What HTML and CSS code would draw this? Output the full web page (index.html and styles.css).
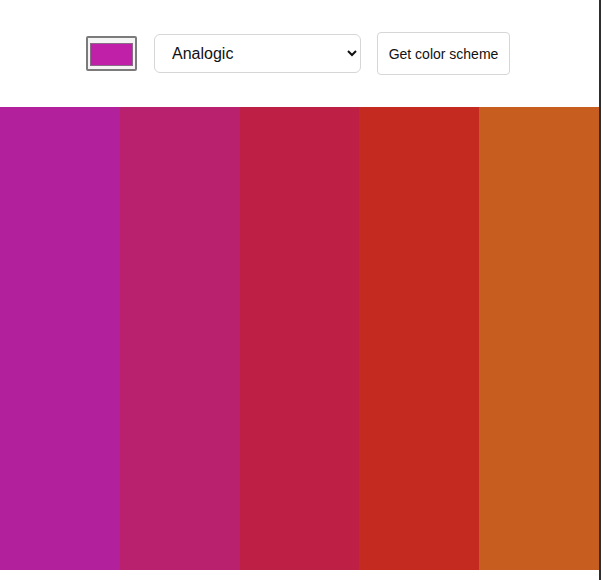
FILE: index.html
```html
<!DOCTYPE html>
<html lang="en">
<head>
<meta charset="utf-8">
<title>Color Scheme Generator</title>
<link rel="stylesheet" href="styles.css">
</head>
<body>
<div class="page">
  <header class="controls">
    <input class="seed" type="color" value="#c020a8">
    <select class="mode">
      <option>Analogic</option>
      <option>Monochrome</option>
      <option>Complement</option>
      <option>Triad</option>
    </select>
    <button class="get" type="button">Get color scheme</button>
  </header>
  <main class="scheme">
    <div class="strip s1"></div>
    <div class="strip s2"></div>
    <div class="strip s3"></div>
    <div class="strip s4"></div>
    <div class="strip s5"></div>
  </main>
</div>
</body>
</html>
```
FILE: styles.css
```css
html, body {
  margin: 0;
  padding: 0;
  background: #ffffff;
}
body {
  font-family: "Liberation Sans", Arial, sans-serif;
}
.page {
  width: 599px;
  min-height: 580px;
  border-right: 2px solid #2e2e2e;
  background: #ffffff;
}
.controls {
  height: 107px;
  display: flex;
  align-items: center;
  justify-content: center;
  padding-right: 3px;
  box-sizing: border-box;
}
.seed {
  width: 51px;
  height: 35px;
  margin: 0 17px 0 0;
  padding: 5px 2px 3px 2px;
  border: 2px solid #7b7b7b;
  border-radius: 2px;
  background: #f4f4f4;
  box-sizing: border-box;
  cursor: pointer;
}
.seed::-webkit-color-swatch-wrapper {
  padding: 0;
}
.seed::-webkit-color-swatch {
  border: 1px solid #8a6a86;
  border-radius: 0;
}
.mode {
  width: 207px;
  height: 39px;
  margin: 0 16px 0 0;
  padding: 0 6px 0 13px;
  border: 1px solid #d6d6d6;
  border-radius: 6px;
  background: #ffffff;
  color: #111111;
  font-family: "Liberation Sans", Arial, sans-serif;
  font-size: 16px;
  box-sizing: border-box;
}
.get {
  width: 133px;
  height: 43px;
  padding: 0;
  border: 1px solid #d6d6d6;
  border-radius: 4px;
  background: #ffffff;
  color: #111111;
  font-family: "Liberation Sans", Arial, sans-serif;
  font-size: 14px;
  box-sizing: border-box;
  cursor: pointer;
}
.scheme {
  display: flex;
  height: 463px;
}
.strip {
  flex: 1;
}
.s1 { background: #b3209c; }
.s2 { background: #b9216f; }
.s3 { background: #be1f45; }
.s4 { background: #c42a1f; }
.s5 { background: #c75d1e; }
```
